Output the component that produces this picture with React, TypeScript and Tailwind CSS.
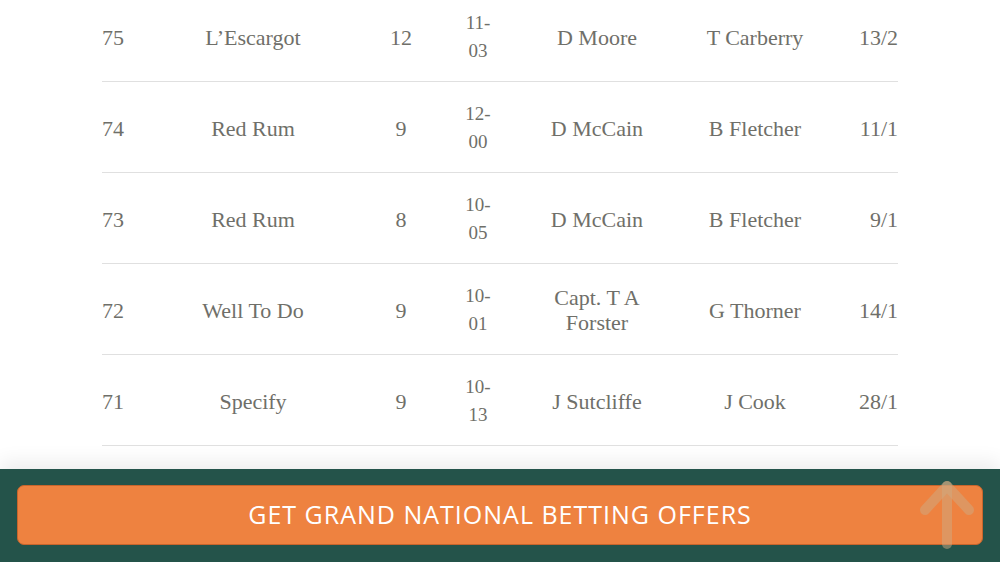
import React from "react";

type Row = { y: string; horse: string; age: string; wt: [string, string]; trainer: React.ReactNode; jockey: string; sp: string };

const rows: Row[] = [
  { y: "75", horse: "L’Escargot", age: "12", wt: ["11-", "03"], trainer: "D Moore", jockey: "T Carberry", sp: "13/2" },
  { y: "74", horse: "Red Rum", age: "9", wt: ["12-", "00"], trainer: "D McCain", jockey: "B Fletcher", sp: "11/1" },
  { y: "73", horse: "Red Rum", age: "8", wt: ["10-", "05"], trainer: "D McCain", jockey: "B Fletcher", sp: "9/1" },
  { y: "72", horse: "Well To Do", age: "9", wt: ["10-", "01"], trainer: "Capt. T A Forster", jockey: "G Thorner", sp: "14/1" },
  { y: "71", horse: "Specify", age: "9", wt: ["10-", "13"], trainer: "J Sutcliffe", jockey: "J Cook", sp: "28/1" },
];

export default function App() {
  return (
    <div className="relative w-[1000px] h-[562px] overflow-hidden bg-white flex flex-col">
      <div className="flex-1 min-h-0 overflow-hidden">
        <div
          className="-mt-[9px] mx-[102px] text-[#6f6f69] text-[22px] leading-[27px]"
          style={{ fontFamily: '"Liberation Serif", "DejaVu Serif", serif', fontVariantNumeric: "oldstyle-nums" }}
        >
          {rows.map((r, i) => (
            <div key={i} className="h-[91px] pt-[2px] border-b border-[#e0e0e0] grid grid-cols-[18px_266px_30px_124px_114px_202px_42px] items-center">
              <div className="text-center">{r.y}</div>
              <div className="text-center">{r.horse}</div>
              <div className="text-center">{r.age}</div>
              <div className="text-center text-[19px] leading-[28px]">
                {r.wt[0]}
                <br />
                {r.wt[1]}
              </div>
              <div className="flex justify-center">
                <div className="w-[108px] text-center leading-[25px]">{r.trainer}</div>
              </div>
              <div className="text-center">{r.jockey}</div>
              <div className="text-right">{r.sp}</div>
            </div>
          ))}
        </div>
      </div>
      <div className="relative h-[93px] shrink-0 bg-[#24534a] shadow-[0_-8px_18px_rgba(0,0,0,0.07)] px-[17px] pt-[16px]">
        <button
          className="w-full h-[60px] rounded-[7px] bg-[#ee8240] border border-[#c8652c] text-white text-[25px] tracking-[1px] flex items-center justify-center"
          style={{ fontFamily: '"Open Sans", "Noto Sans", sans-serif' }}
        >
          GET GRAND NATIONAL BETTING OFFERS
        </button>
        <svg className="absolute left-[917px] top-[9px]" width="60" height="72" viewBox="0 0 60 72">
          <g stroke="rgba(205,170,130,0.5)" strokeWidth="10" strokeLinecap="round" strokeLinejoin="round" fill="none">
            <path d="M30 8 L30 66" />
            <path d="M8 32 L30 8 L52 32" />
          </g>
        </svg>
      </div>
    </div>
  );
}
